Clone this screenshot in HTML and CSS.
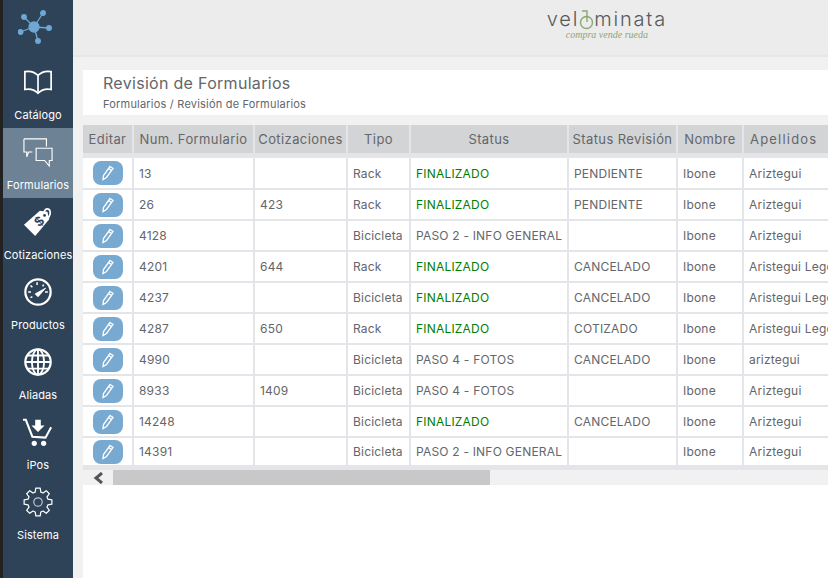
FILE: index.html
```html
<!DOCTYPE html>
<html lang="es">
<head>
    <meta charset="UTF-8">
    <title>Revisión de Formularios</title>
    <link rel="stylesheet" href="styles.css">
</head>
<body>

    <!-- Menu lateral -->
    <nav class="sidebar">
        <div class="brand">
            <svg width="40" height="40" viewBox="0 0 40 40" fill="#6fa8d2" stroke="#6fa8d2" stroke-width="1.3">
                <line x1="16" y1="20" x2="2" y2="25"/><line x1="16" y1="20" x2="6" y2="10"/>
                <line x1="16" y1="20" x2="25" y2="6"/><line x1="16" y1="20" x2="31" y2="21"/>
                <line x1="16" y1="20" x2="20" y2="34"/>
                <circle cx="16" cy="20" r="5"/><circle cx="2.500" cy="25" r="2.300"/><circle cx="6" cy="10" r="2.300"/>
                <circle cx="25" cy="6" r="2.300"/><circle cx="31" cy="21" r="2.300"/><circle cx="20" cy="34" r="2.300"/>
            </svg>
        </div>
        <a class="nav-item">
            <svg class="nav-icon" viewBox="0 0 32 32" fill="none" stroke="#fff" stroke-width="1.8">
                <path d="M2 5c5-1 10 0 14 4 4-4 9-5 14-4v19c-5-1-10 0-14 4-4-4-9-5-14-4z"/><path d="M16 9v19"/>
            </svg>
            <span>Catálogo</span>
        </a>
        <a class="nav-item active">
            <svg class="nav-icon" viewBox="0 0 32 32" fill="none" stroke="#fff" stroke-width="1.2">
                <path d="M1 2h24v8M10 16H6l-2 5v-5H1V2"/><path d="M14 12h17v13h-3v6l-5-6h-9z" fill="#6d8295"/>
            </svg>
            <span>Formularios</span>
        </a>
        <a class="nav-item">
            <svg class="nav-icon" viewBox="0 0 32 32" fill="#fff">
                <path d="M1 19 18 4l8 1 2 8-15 18z"/>
                <path d="M23 11c-2-4 0-9 3-9s4 4 2 8-4 3-4 3" fill="none" stroke="#fff" stroke-width="1.800"/>
                <circle cx="23" cy="9" r="1.500" fill="#2f4358"/>
                <text class="tag-sign" x="14" y="23" transform="rotate(-40 14 18)">$</text>
            </svg>
            <span>Cotizaciones</span>
        </a>
        <a class="nav-item">
            <svg class="nav-icon" viewBox="0 0 32 32" fill="none" stroke="#fff">
                <circle cx="16" cy="16" r="13.500" stroke-width="2.400"/>
                <path d="M5.500 16h3M8 9l2 2M15 5.500v3M22 8l-1 2M26.500 16h-3M8 22l2-1" stroke-width="1.600"/>
                <path d="M13 18l11-6-8 9z" fill="#fff"/>
            </svg>
            <span>Productos</span>
        </a>
        <a class="nav-item">
            <svg class="nav-icon" viewBox="0 0 32 32" fill="none" stroke="#fff" stroke-width="2">
                <circle cx="16" cy="16" r="13.500" stroke-width="2.400"/>
                <ellipse cx="16" cy="16" rx="6.500" ry="13.500"/>
                <path d="M16 2v28M2 16h28M4.500 9h23M4.500 23h23"/>
            </svg>
            <span>Aliadas</span>
        </a>
        <a class="nav-item">
            <svg class="nav-icon" viewBox="0 0 32 32" fill="#fff">
                <path d="M0 3h3l7 18 14 1 6-11" fill="none" stroke="#fff" stroke-width="2.200"/>
                <path d="M13 3h6v6h4l-7 7-7-7h4z"/>
                <circle cx="12" cy="28" r="2.800"/><circle cx="22" cy="28" r="2.800"/>
            </svg>
            <span>iPos</span>
        </a>
        <a class="nav-item">
            <svg class="nav-icon" viewBox="0 0 32 32" fill="none" stroke="#fff" stroke-width="1.300" stroke-linejoin="round">
                <polygon points="13,5.400 13.650,1.200 18.350,1.200 19,5.400 21.400,6.400 24.800,3.900 28.100,7.200 25.600,10.600 26.600,13 30.800,13.650 30.800,18.350 26.600,19 25.600,21.400 28.100,24.800 24.800,28.100 21.400,25.600 19,26.600 18.350,30.800 13.650,30.800 13,26.600 10.600,25.600 7.200,28.100 3.900,24.800 6.400,21.400 5.400,19 1.200,18.350 1.200,13.650 5.400,13 6.400,10.600 3.900,7.200 7.200,3.900 10.600,6.400"/>
                <circle cx="16" cy="16" r="4.500" stroke="#b9c3cd"/>
            </svg>
            <span>Sistema</span>
        </a>
    </nav>

    <div class="page">
        <header class="topbar">
            <div class="logo">
                <div class="logo-name">
                    <span>vel</span>
                    <svg width="15" height="21" viewBox="0 0 15 21" fill="none" stroke="#8aa873" stroke-width="1.400">
                        <circle cx="7.500" cy="13.500" r="6"/><path d="M3 2h5v11"/>
                    </svg>
                    <span>minata</span>
                </div>
                <div class="logo-tag">compra vende rueda</div>
            </div>
        </header>

        <div class="content">
            <div class="title-card">
                <h1>Revisión de Formularios</h1>
                <p>Formularios / Revisión de Formularios</p>
            </div>

            <!-- Tabla -->
            <div class="table-wrap">
                <table>
                    <colgroup>
                        <col class="c-edit"><col class="c-num"><col class="c-cot"><col class="c-tipo">
                        <col class="c-status"><col class="c-rev"><col class="c-nombre"><col class="c-apellido">
                    </colgroup>
                    <thead>
                        <tr>
                            <th>Editar</th><th>Num. Formulario</th><th>Cotizaciones</th><th>Tipo</th>
                            <th>Status</th><th>Status Revisión</th><th>Nombre</th><th class="th-apellido">Apellidos</th>
                        </tr>
                    </thead>
                    <tbody id="rows"></tbody>
                </table>
            </div>
            <div class="scrollbar">
                <div class="scroll-arrow">
                    <svg width="11" height="12" viewBox="0 0 11 12" fill="none" stroke="#555" stroke-width="3"><path d="M9 1 3 6l6 5"/></svg>
                </div>
                <div class="scroll-thumb"></div>
            </div>
        </div>
    </div>

    <script>
        const rows = [
            ['13', '', 'Rack', 'FINALIZADO', 'PENDIENTE', 'Ariztegui'],
            ['26', '423', 'Rack', 'FINALIZADO', 'PENDIENTE', 'Ariztegui'],
            ['4128', '', 'Bicicleta', 'PASO 2 - INFO GENERAL', '', 'Ariztegui'],
            ['4201', '644', 'Rack', 'FINALIZADO', 'CANCELADO', 'Aristegui Legorburu'],
            ['4237', '', 'Bicicleta', 'FINALIZADO', 'CANCELADO', 'Aristegui Legorburu'],
            ['4287', '650', 'Rack', 'FINALIZADO', 'COTIZADO', 'Aristegui Legorburu'],
            ['4990', '', 'Bicicleta', 'PASO 4 - FOTOS', 'CANCELADO', 'ariztegui'],
            ['8933', '1409', 'Bicicleta', 'PASO 4 - FOTOS', '', 'Ariztegui'],
            ['14248', '', 'Bicicleta', 'FINALIZADO', 'CANCELADO', 'Ariztegui'],
            ['14391', '', 'Bicicleta', 'PASO 2 - INFO GENERAL', '', 'Ariztegui']
        ];
        const pencil = '<svg width="12" height="16" viewBox="0 0 12 16" fill="none" stroke="#fff" stroke-width="1.300"><path d="M8 1.500l3 2-6.500 9-3.500 2 .5-4zM6.500 3.500l3 2"/></svg>';
        const tbody = document.getElementById('rows');
        rows.forEach(function(r) {
            const row = tbody.insertRow();
            const statusClass = r[3] === 'FINALIZADO' ? 'done' : '';
            row.innerHTML = `
                <td class="edit"><button class="edit-btn">${pencil}</button></td>
                <td>${r[0]}</td>
                <td>${r[1]}</td>
                <td>${r[2]}</td>
                <td class="${statusClass}">${r[3]}</td>
                <td>${r[4]}</td>
                <td>Ibone</td>
                <td>${r[5]}</td>
            `;
        });
    </script>

</body>
</html>
```

FILE: styles.css
```css
body {
    font-family: Inter, "Open Sans", sans-serif;
    margin: 0;
    height: 578px;
    display: flex;
    overflow: hidden;
    background-color: #f1f1f1;
    color: #63666a;
}

.sidebar {
    width: 70px;
    flex-shrink: 0;
    border-left: 3px solid #222;
    background-color: #2f4358;
    color: #fff;
}

.brand {
    height: 58px;
    display: flex;
    justify-content: center;
    padding-top: 7px;
    box-sizing: border-box;
}

.nav-item {
    height: 70px;
    display: flex;
    flex-direction: column;
    align-items: center;
    padding-top: 8px;
    box-sizing: border-box;
    font-size: 11px;
    letter-spacing: 0.1px;
    white-space: nowrap;
}

.nav-item span {
    margin-top: 9px;
    line-height: 16px;
}

.nav-item.active {
    background-color: #6d8295;
}

.nav-icon {
    width: 30px;
    height: 32px;
}

.tag-sign {
    font-family: "Liberation Sans", sans-serif;
    font-size: 15px;
    font-weight: 700;
    fill: #2f4358;
}

.page {
    flex: 1;
    min-width: 0;
    display: flex;
    flex-direction: column;
}

.topbar {
    height: 55px;
    flex-shrink: 0;
    border-bottom: 2px solid #e6e6ea;
    background-color: #ececec;
    display: flex;
    justify-content: flex-end;
    padding-right: 161px;
}

.logo {
    padding-top: 8px;
    text-align: center;
}

.logo-name {
    display: flex;
    align-items: flex-end;
    font-size: 20px;
    font-weight: 300;
    line-height: 22px;
    letter-spacing: 1.800px;
    color: #555a5c;
}

.logo-tag {
    font-family: "Liberation Serif", serif;
    font-style: italic;
    font-size: 10px;
    line-height: 10px;
    color: #8aa873;
}

.content {
    flex: 1;
    margin: 13px 0 0 10px;
    min-height: 0;
    background-color: #fff;
}

.title-card {
    height: 45px;
    padding-left: 20px;
    box-sizing: border-box;
}

.title-card h1 {
    margin: 0;
    padding-top: 3px;
    font-size: 16px;
    line-height: 20px;
    font-weight: 400;
    letter-spacing: 0.3px;
}

.title-card p {
    margin: 4px 0 0;
    font-size: 11px;
    line-height: 14px;
    letter-spacing: 0.2px;
}

.table-wrap {
    border-top: 10px solid #f1f1f1;
    overflow: hidden;
    height: 345px;
    background-color: #e3e5e8;
}

table {
    table-layout: fixed;
    width: 865px;
    border-collapse: separate;
    border-spacing: 2px;
    margin: -2px 0 0 -2px;
}

.c-edit { width: 49px; }
.c-num { width: 119px; }
.c-cot { width: 91px; }
.c-tipo { width: 61px; }
.c-status { width: 156px; }
.c-rev { width: 107px; }
.c-nombre { width: 64px; }
.c-apellido { width: 200px; }

th {
    height: 28px;
    padding: 0;
    box-sizing: border-box;
    background-color: #d3d4d6;
    font-size: 13px;
    font-weight: 400;
    letter-spacing: 0.4px;
    text-align: center;
}

th.th-apellido {
    padding-left: 6px;
    letter-spacing: 1.200px;
    text-align: left;
}

tbody tr:first-child td {
    border-top: 3px solid #e3e5e8;
    height: 33px;
}

tbody tr:last-child td {
    height: 27px;
}

td {
    height: 29px;
    padding: 0 0 0 5px;
    box-sizing: border-box;
    background-color: #fff;
    font-size: 12px;
    letter-spacing: 0.2px;
    white-space: nowrap;
    overflow: hidden;
}

td.edit {
    padding: 0;
    text-align: center;
}

td.done {
    color: #008000;
}

.edit-btn {
    width: 30px;
    height: 24px;
    padding: 0;
    border: none;
    border-radius: 8px;
    background-color: #78a9d1;
    display: inline-flex;
    align-items: center;
    justify-content: center;
    vertical-align: middle;
}

.scrollbar {
    height: 15px;
    background-color: #f1f1f1;
    display: flex;
}

.scroll-arrow {
    width: 30px;
    display: flex;
    align-items: center;
    justify-content: center;
}

.scroll-thumb {
    width: 377px;
    background-color: #c8c8c8;
}
```
